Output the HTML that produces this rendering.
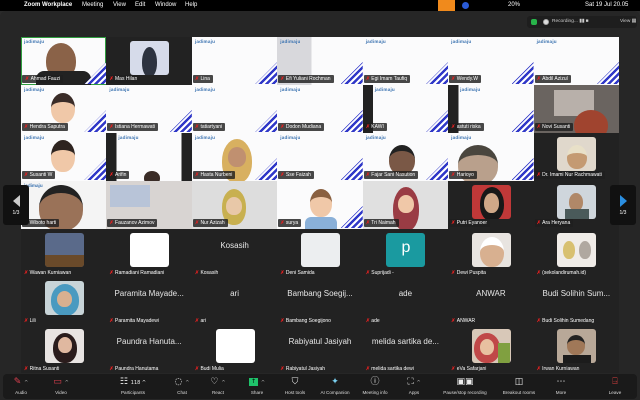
<!DOCTYPE html>
<html><head><meta charset="utf-8"><style>
*{margin:0;padding:0;box-sizing:border-box}
body{width:640px;height:400px;background:#2a2a2a;font-family:"Liberation Sans",sans-serif;position:relative;overflow:hidden;color:#fff}
#menu{position:absolute;left:0;top:0;width:640px;height:11px;background:#000;font-size:6px;line-height:11px}
#menu span{position:absolute;top:0}
#win{position:absolute;left:0;top:11px;width:640px;height:389px;background:#262626;border-radius:6px 6px 0 0}
#grid{position:absolute;left:21px;top:37px;width:598px;height:336px;display:grid;grid-template-columns:repeat(7,1fr);grid-template-rows:repeat(7,48px);background:#1c1c1c}
.t{position:relative;overflow:hidden;background:#222}
.s{background:#fbfbfc}
.s .logo{position:absolute;left:3px;top:2px;font-size:4.6px;color:#3a72b0;font-weight:bold;letter-spacing:.2px}
.s .st{position:absolute;right:0;bottom:1px;width:22px;height:22px;background:repeating-linear-gradient(135deg,#3038c8 0 2.5px,#fff 2.5px 4.5px);clip-path:polygon(100% 0,100% 100%,0 100%)}
.l{position:absolute;left:1px;bottom:2px;height:8px;padding:0 3px 0 2px;background:rgba(30,30,30,.82);font-size:5px;line-height:8px;color:#fff;white-space:nowrap;border-radius:1px}
.l:before{content:"✗ ";color:#e02020;font-weight:bold}
.d .l{background:none;bottom:0px}
.th{position:absolute;left:50%;top:4px;width:39px;height:34px;margin-left:-19px;border-radius:3px;overflow:hidden}
.nm{position:absolute;left:0;right:0;top:12px;text-align:center;font-size:8px;color:#e6e6e6}
.face{position:absolute;border-radius:50% 50% 45% 45%}
.tb{position:absolute;left:3px;top:374px;width:634px;height:25px;background:#1a1a1a;border-radius:4px}
.it{position:absolute;top:0;font-size:4.6px;color:#ddd;text-align:center;width:50px;margin-left:-25px}
.it i{display:block;height:16px;font-style:normal;font-size:9px;line-height:16px;color:#eee;font-family:"DejaVu Sans",sans-serif}
.it b{font-weight:normal;display:block}
.arr{position:absolute;width:26px;height:40px;background:#111;border-radius:3px;font-size:5px;text-align:center}
</style></head><body>
<div id="menu">
<span style="left:10px;font-size:8px"></span>
<span style="left:24px;font-weight:bold">Zoom Workplace</span>
<span style="left:82px">Meeting</span><span style="left:113px">View</span><span style="left:135px">Edit</span><span style="left:155px">Window</span><span style="left:185px">Help</span>
<span style="left:438px;top:0;width:17px;height:11px;background:#f08a1c"></span>
<span style="left:462px;top:2px;width:7px;height:7px;border-radius:50%;background:#2a5bd7"></span>
<span style="left:508px">20%</span>
<span style="left:585px">Sat 19 Jul 20.05</span>
</div>
<div id="win">
<div style="position:absolute;left:527px;top:5px;width:110px;height:12px;background:#1e1e1e;border-radius:3px;font-size:4.8px;line-height:12px;color:#ccc">
<span style="position:absolute;left:4px;top:3px;width:6px;height:6px;border-radius:2px;background:#28b44a"></span>
<span style="position:absolute;left:16px;top:3px;width:6px;height:6px;border-radius:50%;background:#ddd;border:1.5px solid #aaa"></span>
<span style="position:absolute;left:25px">Recording...  ▮▮  ■</span>
<span style="position:absolute;left:93px">View ▦</span></div>
</div>
<div id="grid">
<!-- row1 -->
<div class="t s" style="outline:1.5px solid #2f9d3f;outline-offset:-1.5px"><span class="logo">jadimaju</span><div class="face" style="left:25px;top:6px;width:30px;height:36px;background:#8a6248"></div><div style="position:absolute;left:15px;top:34px;width:55px;height:14px;background:#222;border-radius:8px 8px 0 0"></div><div class="st"></div><div class="l" style="padding-left:3px">Ahmad Fauzi</div></div>
<div class="t"><div class="th" style="background:#d6dbea;top:4px"><div class="face" style="left:12px;top:6px;width:15px;height:30px;background:#2d3340"></div></div><div class="l">Mas Hilan</div></div>
<div class="t s"><span class="logo">jadimaju</span><div class="st"></div><div class="l">Lina</div></div>
<div class="t s" style="background:linear-gradient(90deg,#d8d8dc 0 40%,#fbfbfc 40%)"><span class="logo">jadimaju</span><div class="st"></div><div class="l">Efi Yuliani Rochman</div></div>
<div class="t s"><span class="logo">jadimaju</span><div class="st"></div><div class="l">Egi Imam Taufiq</div></div>
<div class="t s"><span class="logo">jadimaju</span><div class="st"></div><div class="l">Wendy.W</div></div>
<div class="t s"><span class="logo">jadimaju</span><div class="st"></div><div class="l">Abdil Azizul</div></div>
<!-- row2 -->
<div class="t s"><span class="logo">jadimaju</span><div class="face" style="left:30px;top:8px;width:24px;height:30px;background:#f0c8a8;border-top:9px solid #3a2c28"></div><div class="st"></div><div class="l">Hendra Saputra</div></div>
<div class="t s"><span class="logo">jadimaju</span><div class="st"></div><div class="l">Istiana Hermawati</div></div>
<div class="t s"><span class="logo">jadimaju</span><div class="st"></div><div class="l">tatiartyani</div></div>
<div class="t s"><span class="logo">jadimaju</span><div class="st"></div><div class="l">Dodon Mudiana</div></div>
<div class="t s" style="background:linear-gradient(90deg,#222 0 12%,#fbfbfc 12%)"><span class="logo" style="left:12px">jadimaju</span><div class="st"></div><div class="l">KAWI</div></div>
<div class="t s" style="background:linear-gradient(90deg,#222 0 12%,#fbfbfc 12%)"><span class="logo" style="left:12px">jadimaju</span><div class="st"></div><div class="l">astuti riska</div></div>
<div class="t" style="background:#6a6460"><div style="position:absolute;left:20px;top:5px;width:40px;height:26px;background:#b8b0aa"></div><div class="face" style="left:40px;top:25px;width:34px;height:30px;background:#a0442f"></div><div class="l">Novi Susanti</div></div>
<!-- row3 -->
<div class="t s"><span class="logo">jadimaju</span><div class="face" style="left:30px;top:7px;width:24px;height:32px;background:#f0c8a8;border-top:10px solid #2e2420"></div><div class="st"></div><div class="l">Susanti W</div></div>
<div class="t s" style="background:linear-gradient(90deg,#222 0 12%,#fbfbfc 12% 88%,#222 88%)"><span class="logo" style="left:12px">jadimaju</span><div class="face" style="left:38px;top:38px;width:16px;height:14px;background:#3a2c26"></div><div class="l">Arifin</div></div>
<div class="t s"><span class="logo">jadimaju</span><div class="face" style="left:30px;top:6px;width:30px;height:44px;background:#d8b060"></div><div class="face" style="left:36px;top:14px;width:18px;height:20px;background:#c09070"></div><div class="st"></div><div class="l">Hasta Nurbeni</div></div>
<div class="t s"><span class="logo">jadimaju</span><div class="st"></div><div class="l">Sse Faizah</div></div>
<div class="t s"><span class="logo">jadimaju</span><div class="face" style="left:26px;top:12px;width:26px;height:30px;background:#7a5846;border-top:6px solid #222"></div><div class="st"></div><div class="l">Fajar Sani Nasution</div></div>
<div class="t s"><span class="logo">jadimaju</span><div class="face" style="left:10px;top:12px;width:40px;height:40px;background:#b9a08c;border-top:10px solid #4a463e"></div><div class="st"></div><div class="l">Harioyo</div></div>
<div class="t"><div class="th" style="background:#e0d8cc"><div class="face" style="left:10px;top:8px;width:20px;height:24px;background:#c49a72;border-top:8px solid #e8e0c8"></div></div><div class="l">Dr. Imami Nur Rachmawati</div></div>
<!-- row4 -->
<div class="t" style="background:#f4f4f4"><span style="position:absolute;left:3px;top:2px;font-size:4.6px;color:#3a72b0;font-weight:bold">jadimaju</span><div class="face" style="left:18px;top:4px;width:44px;height:46px;background:#9a7258;border-top:8px solid #222"></div><div class="l">Wiboto harti</div></div>
<div class="t" style="background:#d8d4d2"><div style="position:absolute;left:4px;top:4px;width:40px;height:22px;background:#b8c4d8"></div><div class="l">Fauzanov Azimov</div></div>
<div class="t" style="background:#ddd"><div class="face" style="left:30px;top:8px;width:24px;height:36px;background:#c8b050"></div><div class="face" style="left:34px;top:16px;width:16px;height:18px;background:#e8c8a8"></div><div class="l">Nur Azizah</div></div>
<div class="t s"><div class="face" style="left:33px;top:8px;width:22px;height:28px;background:#f0c8a8;border-top:8px solid #8a6040"></div><div style="position:absolute;left:28px;top:36px;width:32px;height:14px;background:#8ab0d8;border-radius:6px 6px 0 0"></div><div class="st"></div><div class="l">surya</div></div>
<div class="t" style="background:#e0e0e0"><div class="face" style="left:30px;top:6px;width:26px;height:44px;background:#9a3c44"></div><div class="face" style="left:35px;top:14px;width:16px;height:18px;background:#f0c8a8"></div><div class="l">Tri Naimah</div></div>
<div class="t"><div class="th" style="background:#c03838"><div class="face" style="left:8px;top:2px;width:24px;height:34px;background:#181818"></div><div class="face" style="left:12px;top:8px;width:15px;height:20px;background:#d0a888"></div></div><div class="l">Putri Eyanoer</div></div>
<div class="t"><div class="th" style="background:#cfd6dc"><div class="face" style="left:12px;top:8px;width:14px;height:18px;background:#b08868"></div><div style="position:absolute;left:8px;top:24px;width:24px;height:10px;background:#4a5a5a"></div></div><div class="l">Ara Heryana</div></div>
<!-- row5 -->
<div class="t d"><div class="th" style="background:#5a6a8a"><div style="position:absolute;left:0;bottom:0;width:39px;height:12px;background:#6a4a2a"></div></div><div class="l">Wawan Kurniawan</div></div>
<div class="t d"><div class="th" style="background:#fff"></div><div class="l">Ramadiani Ramadiani</div></div>
<div class="t d"><div class="nm">Kosasih</div><div class="l">Kosasih</div></div>
<div class="t d"><div class="th" style="background:#eceef0"></div><div class="l">Deni Samida</div></div>
<div class="t d"><div class="th" style="background:#1a9aa0;font-size:16px;text-align:center;line-height:30px;color:#fff">p</div><div class="l">Suprijadi -</div></div>
<div class="t d"><div class="th" style="background:#e8e4e0"><div class="face" style="left:8px;top:4px;width:24px;height:30px;background:#d8b090;border-top:8px solid #fff"></div></div><div class="l">Dewi Puspita</div></div>
<div class="t d"><div class="th" style="background:#f0ece8"><div class="face" style="left:6px;top:8px;width:12px;height:18px;background:#d8c070"></div><div class="face" style="left:22px;top:8px;width:12px;height:18px;background:#b0a8a0"></div></div><div class="l">(sekolandirumah.id)</div></div>
<!-- row6 -->
<div class="t d"><div class="th" style="background:#c8d4d8"><div class="face" style="left:6px;top:3px;width:28px;height:32px;background:#4a9ac0"></div><div class="face" style="left:12px;top:10px;width:15px;height:16px;background:#d8b090"></div></div><div class="l">Lili</div></div>
<div class="t d"><div class="nm">Paramita Mayade...</div><div class="l">Paramita Mayadewi</div></div>
<div class="t d"><div class="nm">ari</div><div class="l">ari</div></div>
<div class="t d"><div class="nm">Bambang Soegij...</div><div class="l">Bambang Soegijono</div></div>
<div class="t d"><div class="nm">ade</div><div class="l">ade</div></div>
<div class="t d"><div class="nm">ANWAR</div><div class="l">ANWAR</div></div>
<div class="t d"><div class="nm">Budi Solihin Sum...</div><div class="l">Budi Solihin Sumedang</div></div>
<!-- row7 -->
<div class="t d"><div class="th" style="background:#e8e4e2"><div class="face" style="left:8px;top:4px;width:24px;height:30px;background:#2a1c1c"></div><div class="face" style="left:13px;top:8px;width:14px;height:16px;background:#e0b8a0"></div></div><div class="l">Ritna Susanti</div></div>
<div class="t d"><div class="nm">Paundra Hanuta...</div><div class="l">Paundra Hanutama</div></div>
<div class="t d"><div class="th" style="background:#fff"></div><div class="l">Budi Mulia</div></div>
<div class="t d"><div class="nm">Rabiyatul Jasiyah</div><div class="l">Rabiyatul Jasiyah</div></div>
<div class="t d"><div class="nm">melida sartika de...</div><div class="l">melida sartika dewi</div></div>
<div class="t d"><div class="th" style="background:#d8c8b8"><div class="face" style="left:2px;top:4px;width:26px;height:30px;background:#c04848"></div><div class="face" style="left:8px;top:10px;width:14px;height:16px;background:#e8c0a0"></div><div style="position:absolute;left:26px;top:14px;width:12px;height:20px;background:#80a040"></div></div><div class="l">eVa Safarjani</div></div>
<div class="t d"><div class="th" style="background:#b8a898"><div class="face" style="left:10px;top:6px;width:18px;height:20px;background:#a07858;border-top:5px solid #222"></div><div style="position:absolute;left:6px;top:26px;width:28px;height:10px;background:#1c1c1c"></div></div><div class="l">Irwan Kurniawan</div></div>
</div>
<div class="arr" style="left:3px;top:185px"><div style="margin:10px auto 0;width:0;height:0;border:6px solid transparent;border-right:7px solid #ccc;border-left:0"></div><div style="margin-top:3px">1/3</div></div>
<div class="arr" style="left:610px;top:185px"><div style="margin:10px auto 0;width:0;height:0;border:6px solid transparent;border-left:7px solid #2a8ee0;border-right:0"></div><div style="margin-top:3px">1/3</div></div>
<div class="tb">
<div class="it" style="left:18px"><i style="color:#e04050">✎ <span style="color:#aaa;font-size:5px">^</span></i><b>Audio</b></div>
<div class="it" style="left:58px"><i style="color:#e04050">▭ <span style="color:#aaa;font-size:5px">^</span></i><b>Video</b></div>
<div class="it" style="left:130px"><i>☷ <span style="font-size:5px">118 ^</span></i><b>Participants</b></div>
<div class="it" style="left:179px"><i>◌ <span style="color:#aaa;font-size:5px">^</span></i><b>Chat</b></div>
<div class="it" style="left:215px"><i>♡ <span style="color:#aaa;font-size:5px">^</span></i><b>React</b></div>
<div class="it" style="left:254px"><i><span style="display:inline-block;width:9px;height:8px;background:#1ec26a;color:#000;font-size:6px;line-height:8px;vertical-align:middle">↑</span> <span style="color:#aaa;font-size:5px">^</span></i><b>Share</b></div>
<div class="it" style="left:292px"><i>⛉</i><b>Host tools</b></div>
<div class="it" style="left:332px"><i style="color:#7ad0f0">✦</i><b>AI Companion</b></div>
<div class="it" style="left:372px"><i>ⓘ</i><b>Meeting info</b></div>
<div class="it" style="left:411px"><i>⛶ <span style="color:#aaa;font-size:5px">^</span></i><b>Apps</b></div>
<div class="it" style="left:462px;width:60px;margin-left:-30px"><i>▣▣</i><b>Pause/stop recording</b></div>
<div class="it" style="left:516px"><i>◫</i><b>Breakout rooms</b></div>
<div class="it" style="left:558px"><i>⋯</i><b>More</b></div>
<div class="it" style="left:612px"><i style="color:#e04040">⍈</i><b>Leave</b></div>
</div>
</body></html>
